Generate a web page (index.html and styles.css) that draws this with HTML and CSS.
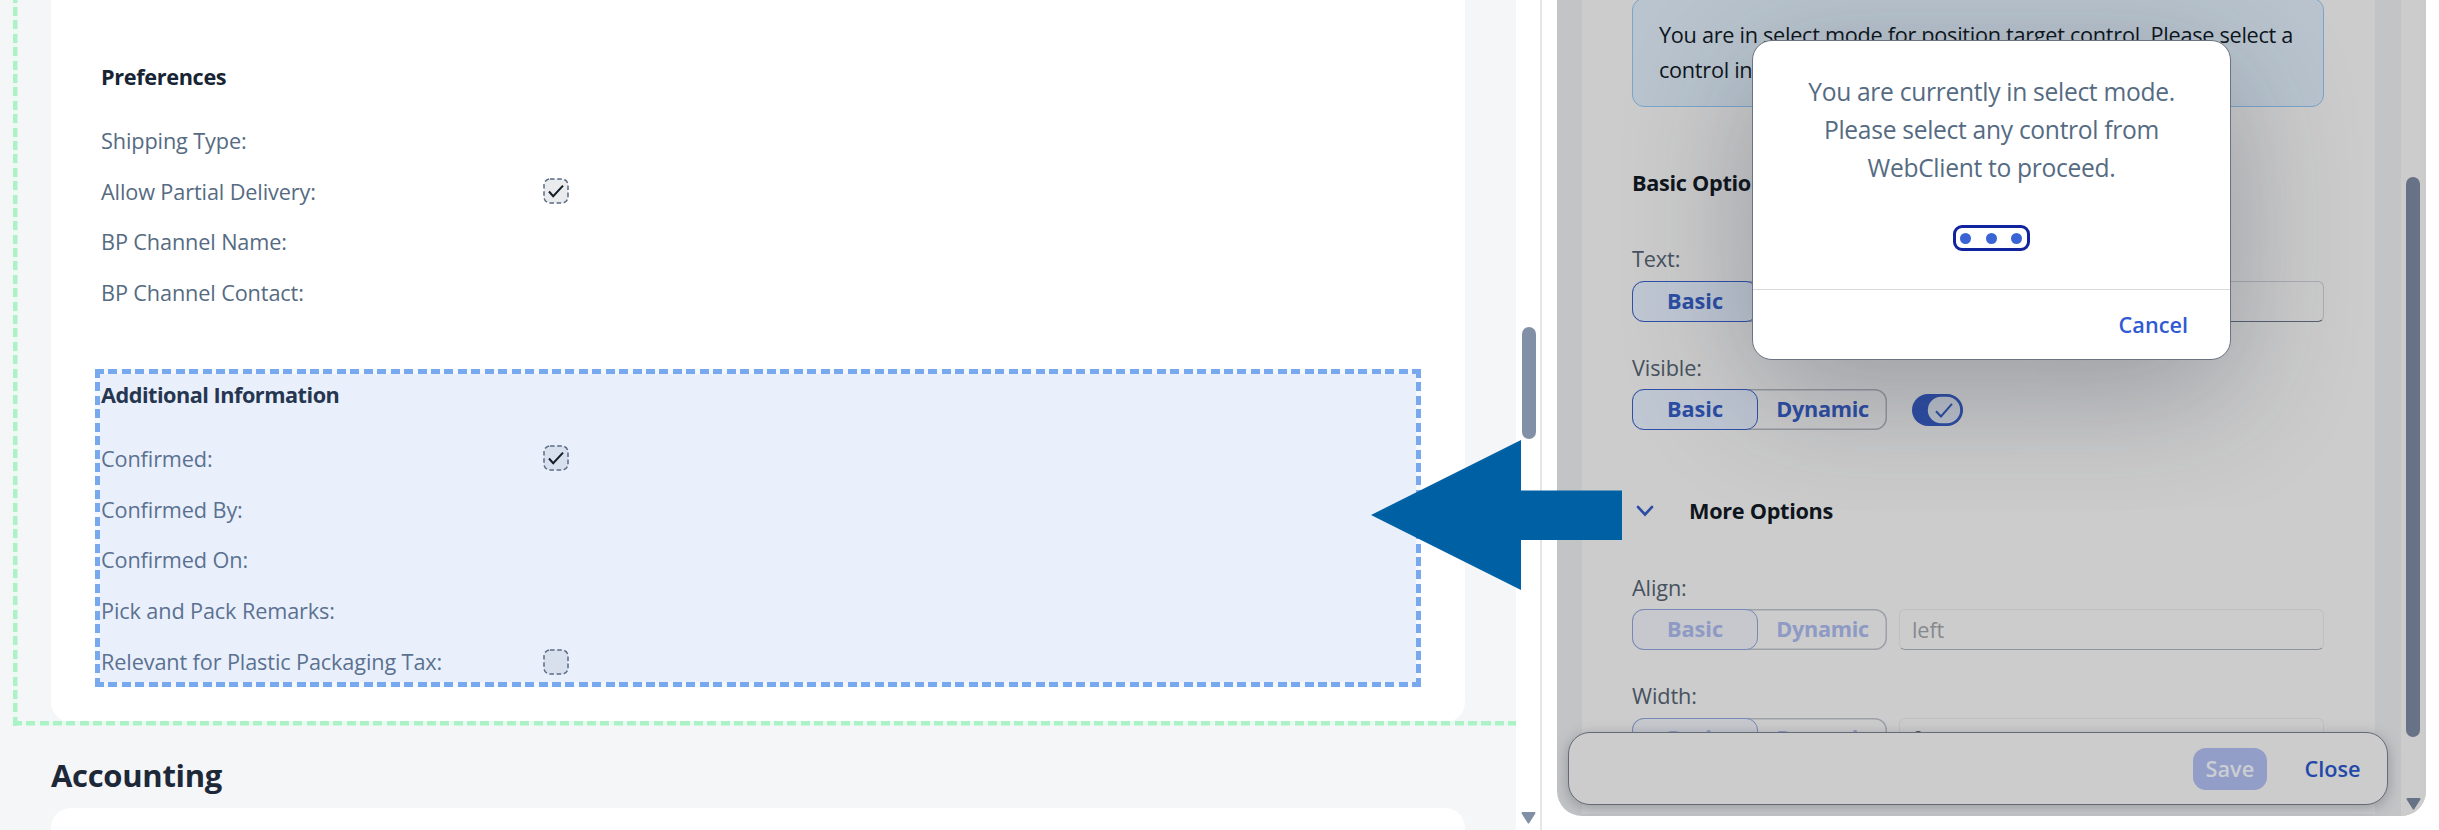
FILE: index.html
```html
<!DOCTYPE html>
<html lang="en">
<head>
    <meta charset="UTF-8">
    <meta name="viewport" content="width=device-width, initial-scale=1.0">
    <title>Select Mode</title>
    <link rel="stylesheet" href="styles.css">
</head>
<body>
    <main class="client">
        <section class="card">
            <div class="group">
                <h3>Preferences</h3>
                <div class="row"><label>Shipping Type:</label></div>
                <div class="row">
                    <label>Allow Partial Delivery:</label>
                    <svg class="checkbox" viewBox="0 0 26 26">
                        <rect class="box" x="1" y="1" width="24" height="24" rx="6" />
                        <path class="tick" d="M6 13.5l4.2 4.7L20 7.6" />
                    </svg>
                </div>
                <div class="row"><label>BP Channel Name:</label></div>
                <div class="row"><label>BP Channel Contact:</label></div>
            </div>
            <div class="group selected">
                <h3>Additional Information</h3>
                <div class="row">
                    <label>Confirmed:</label>
                    <svg class="checkbox" viewBox="0 0 26 26">
                        <rect class="box" x="1" y="1" width="24" height="24" rx="6" />
                        <path class="tick" d="M6 13.5l4.2 4.7L20 7.6" />
                    </svg>
                </div>
                <div class="row"><label>Confirmed By:</label></div>
                <div class="row"><label>Confirmed On:</label></div>
                <div class="row"><label>Pick and Pack Remarks:</label></div>
                <div class="row">
                    <label>Relevant for Plastic Packaging Tax:</label>
                    <svg class="checkbox" viewBox="0 0 26 26">
                        <rect class="box" x="1" y="1" width="24" height="24" rx="6" />
                    </svg>
                </div>
            </div>
        </section>
        <h2>Accounting</h2>
        <section class="card next"></section>
        <div class="hover-frame"></div>
    </main>

    <div class="scrollbar client-scroll">
        <div class="thumb"></div>
        <svg class="arrow-down" viewBox="0 0 15 12"><path d="M1.5 1h12L7.5 10.5z" /></svg>
    </div>

    <aside class="panel">
        <div class="panel-body">
            <div class="content">
                <div class="strip">You are in select mode for position target control. Please select a<br>control in</div>
                <h4>Basic Options</h4>
                <div class="field">
                    <label>Text:</label>
                    <div class="controls">
                        <div class="segmented"><span class="on">Basic</span><span></span></div>
                        <div class="input"></div>
                    </div>
                </div>
                <div class="field">
                    <label>Visible:</label>
                    <div class="controls">
                        <div class="segmented"><span class="on">Basic</span><span>Dynamic</span></div>
                        <svg class="switch" viewBox="0 0 51 32">
                            <rect width="51" height="32" rx="16" fill="#2c4da4" />
                            <rect x="15.8" y="2.8" width="32.4" height="26.4" rx="13.2" fill="#bcc2cc" />
                            <path d="M24 17.2l5 5.3L40 9.8" fill="none" stroke="#2c4da4" stroke-width="2" />
                        </svg>
                    </div>
                </div>
                <h4 class="more">
                    <svg viewBox="0 0 18 12"><path d="M2 2l7 7.5L16 2" /></svg>
                    More Options
                </h4>
                <div class="field disabled">
                    <label>Align:</label>
                    <div class="controls">
                        <div class="segmented"><span class="on">Basic</span><span>Dynamic</span></div>
                        <div class="input">left</div>
                    </div>
                </div>
                <div class="field disabled">
                    <label>Width:</label>
                    <div class="controls">
                        <div class="segmented"><span class="on">Basic</span><span>Dynamic</span></div>
                        <div class="input dark">0</div>
                    </div>
                </div>
            </div>
        </div>
        <div class="scrollbar panel-scroll">
            <div class="thumb"></div>
            <svg class="arrow-down" viewBox="0 0 15 12"><path d="M1.5 1h12L7.5 10.5z" /></svg>
        </div>
        <footer class="footer">
            <button class="save">Save</button>
            <button class="close">Close</button>
        </footer>
        <div class="dialog">
            <div class="dialog-body">
                <p>You are currently in select mode.<br>Please select any control from<br>WebClient to proceed.</p>
                <div class="busy"><i></i><i></i><i></i></div>
            </div>
            <div class="dialog-footer"><button>Cancel</button></div>
        </div>
    </aside>

    <svg class="pointer" viewBox="0 0 251 150">
        <path d="M0 75L150 0v50.5h101v49.5H150v50z" fill="#0060a4" />
    </svg>
</body>
</html>
```
FILE: styles.css
```css
* {
    box-sizing: border-box;
}

body {
    margin: 0;
    height: 830px;
    overflow: hidden;
    display: flex;
    position: relative;
    background: #fff;
    font-family: "Open Sans", "Noto Sans", sans-serif;
    font-size: 21.7px;
    letter-spacing: -0.13px;
    color: #556b82;
}

h2, h3, h4, p {
    margin: 0;
}

button {
    font: inherit;
    font-weight: 600;
    letter-spacing: 0;
    border: none;
    background: none;
    padding: 0;
}

/* Left: web client */
.client {
    position: relative;
    width: 1516px;
    height: 830px;
    flex: none;
    overflow: hidden;
    padding: 0 51px;
    background: #f4f6f8;
}

.card {
    height: 722px;
    padding: 51.3px 51px 51px 50px;
    background: #fff;
    border-radius: 0 0 20px 20px;
}

.card.next {
    height: 60px;
    border-radius: 20px 20px 0 0;
}

.client h2 {
    height: 86px;
    line-height: 106px;
    font-size: 31px;
    letter-spacing: -0.3px;
    color: #1d2939;
}

.group {
    height: 318px;
}

.group h3 {
    height: 63.5px;
    line-height: 51px;
    font-size: 21.7px;
    letter-spacing: -0.35px;
    color: #172434;
}

.row {
    display: flex;
    align-items: center;
    height: 50.85px;
}

.row label {
    width: 442px;
}

.checkbox {
    width: 26px;
    height: 26px;
}

.box {
    fill: #e9ebed;
    stroke: #5a6b84;
    stroke-width: 1.5;
    stroke-dasharray: 4.6 2.6;
}

.tick {
    fill: none;
    stroke: #131e29;
    stroke-width: 2;
}

/* Dashed frame drawn by four repeating gradients, so every corner starts on a dash */
.selected {
    margin: 0 -7px 0 -6px;
    padding: 0 7px 0 6px;
    color: #5b7191;
    background:
        repeating-linear-gradient(90deg, #78a9ee 0 9px, #f5f8fe 9px 13.44px) top / 100% 5px no-repeat,
        repeating-linear-gradient(90deg, #78a9ee 0 9px, #f5f8fe 9px 13.44px) bottom / 100% 5px no-repeat,
        repeating-linear-gradient(#78a9ee 0 9px, #f5f8fe 9px 13.43px) left / 5px 100% no-repeat,
        repeating-linear-gradient(#78a9ee 0 9px, #f5f8fe 9px 13.43px) right / 5px 100% no-repeat,
        #e9f0fc;
}

.selected h3 {
    letter-spacing: -0.5px;
    color: #263650;
}

.selected .box {
    fill: #d8e0ee;
}

.hover-frame {
    position: absolute;
    left: 12.5px;
    top: 0;
    right: 0;
    height: 725.5px;
    background:
        repeating-linear-gradient(90deg, #abf2c6 0 9px, #e9faf1 9px 13.35px) bottom / 100% 4.5px no-repeat,
        repeating-linear-gradient(0deg, #abf2c6 0 9px, #e9faf1 9px 13.39px) left / 4.5px 100% no-repeat;
}

/* Scrollbars */
.scrollbar {
    display: flex;
    flex-direction: column;
    align-items: center;
}

.thumb {
    width: 14px;
    border-radius: 7px;
}

.arrow-down {
    width: 15px;
    height: 12px;
}

.arrow-down path {
    stroke-width: 2;
    stroke-linejoin: round;
}

.client-scroll {
    flex: none;
    width: 26px;
    padding: 327px 0 0 1px;
    border-right: 2px solid #e6e6e6;
}

.client-scroll .thumb {
    height: 112px;
    background: #8290a7;
}

.client-scroll .arrow-down {
    margin-top: 373px;
    fill: #8290a7;
    stroke: #8290a7;
}

/* Right: properties panel */
.panel {
    position: relative;
    display: flex;
    width: 869px;
    height: 816px;
    margin-left: 14.5px;
    overflow: hidden;
    background: #c3c4c6;
    border-radius: 0 0 25px 25px;
    color: #475260;
}

.panel-body {
    width: 844px;
    padding: 0 26px 0 25px;
}

.content {
    height: 816px;
    padding: 0 50.5px;
    background: #ccc;
}

.strip {
    height: 109px;
    margin-top: -2px;
    padding: 18px 26px;
    border: 1.5px solid #7ba5c9;
    border-radius: 12px;
    background: #b9c4ce;
    line-height: 35.2px;
    letter-spacing: -0.29px;
    white-space: nowrap;
    color: #0e151c;
}

.content h4 {
    height: 30px;
    margin: 61px 0 46.3px;
    line-height: 30px;
    font-size: 21.7px;
    letter-spacing: -0.3px;
    color: #0e151c;
}

.content h4.more {
    display: flex;
    align-items: center;
    gap: 35px;
    margin: 35px 0 46.6px;
    padding-left: 4px;
}

.more svg {
    width: 18px;
    height: 12px;
    fill: none;
    stroke: #2c4da4;
    stroke-width: 2.6;
    stroke-linecap: round;
}

.field {
    height: 108.5px;
}

.field label {
    display: block;
    height: 36.4px;
    line-height: 30px;
}

.controls {
    display: flex;
    align-items: center;
    height: 41px;
}

.segmented {
    display: flex;
    width: 255px;
    height: 41px;
    border-radius: 12px;
    box-shadow: inset 0 0 0 1.5px #94989f;
    color: #2c4da4;
    font-weight: 700;
    line-height: 40px;
    text-align: center;
}

.segmented span {
    flex: 1;
    letter-spacing: -0.3px;
}

.segmented .on {
    flex: none;
    width: 126px;
    border: 1.5px solid #2f4fa8;
    border-radius: 12px;
    background: #bfc7d3;
    line-height: 38px;
    letter-spacing: 0;
}

.input {
    flex: 1;
    height: 41px;
    margin-left: 12px;
    padding-left: 12px;
    border: 1.5px solid #a9acb1;
    border-bottom-color: #566170;
    border-radius: 6px;
    line-height: 40px;
}

.switch {
    width: 51px;
    height: 32px;
    margin-left: 24.5px;
}

.disabled .segmented {
    color: #8e9ac4;
    box-shadow: inset 0 0 0 1.5px #9da1a7;
}

.disabled .on {
    border-color: #7688b6;
    background: #c6c8cd;
}

.disabled .input {
    border-color: #bfc0c2;
    border-bottom-color: #90959c;
    color: #87898c;
}

.disabled .input.dark {
    color: #4a5058;
}

.panel-scroll {
    width: 25px;
    padding-top: 177px;
    background: #ccc;
}

.panel-scroll .thumb {
    height: 560px;
    background: #687286;
}

.panel-scroll .arrow-down {
    margin-top: 61px;
    fill: #687286;
    stroke: #687286;
}

.footer {
    position: absolute;
    left: 11px;
    bottom: 11px;
    width: 820px;
    height: 73px;
    display: flex;
    align-items: center;
    justify-content: flex-end;
    gap: 37.5px;
    padding-right: 26px;
    border: 1.5px solid #646b76;
    border-radius: 22px;
    background: #ccc;
    box-shadow: 0 3px 14px rgba(70, 78, 90, 0.4);
}

.save {
    width: 74px;
    height: 42px;
    border-radius: 13px;
    background: #929ec8;
    color: #cacdd2;
}

.close {
    color: #2348a8;
}

/* Select mode dialog */
.dialog {
    position: absolute;
    left: 195.5px;
    top: 40px;
    width: 479px;
    height: 320px;
    border: 1.5px solid #6b7380;
    border-radius: 20px;
    background: #fff;
    box-shadow: 0 32px 127px rgba(34, 40, 60, 0.3);
}

.dialog-body {
    display: flex;
    flex-direction: column;
    align-items: center;
    height: 248.5px;
    padding-top: 32px;
    border-bottom: 1.5px solid #d9d9d9;
    color: #556b82;
    text-align: center;
}

.dialog-body p {
    font-size: 24.6px;
    line-height: 38.1px;
    letter-spacing: -0.3px;
}

.busy {
    display: flex;
    align-items: center;
    justify-content: space-between;
    width: 77px;
    height: 26px;
    margin: 38px 1px 0 0;
    padding: 0 4.5px;
    border: 3px solid #12239e;
    border-radius: 9px;
}

.busy i {
    width: 11px;
    height: 11px;
    border-radius: 50%;
    background: #3a63d6;
}

.dialog-footer {
    display: flex;
    align-items: center;
    justify-content: flex-end;
    height: 69px;
    padding-right: 42px;
}

.dialog-footer button {
    color: #3059d4;
}

/* Big callout arrow over both panes */
.pointer {
    position: absolute;
    left: 1371px;
    top: 439.5px;
    width: 251px;
    height: 150px;
}
```
